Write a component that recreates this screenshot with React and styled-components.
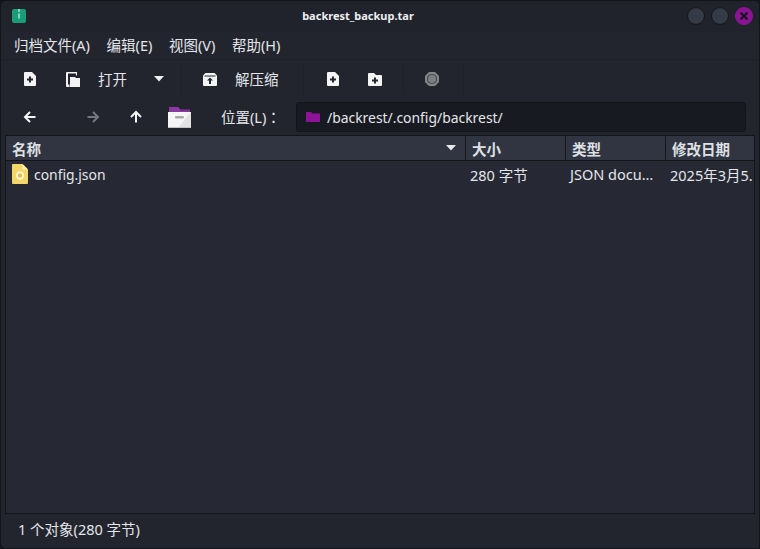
import React from "react"
import styled, { createGlobalStyle } from "styled-components"

const Global = createGlobalStyle`
  html, body {
    margin: 0;
    padding: 0;
    background: #14151b;
  }
  * {
    box-sizing: border-box;
  }
`

const FileAddIcon = () => (
  <svg width="12" height="14" viewBox="0 0 12 14">
    <path d="M1 0H8L12 4V13a1 1 0 0 1-1 1H1a1 1 0 0 1-1-1V1a1 1 0 0 1 1-1Z" fill="#f4f4f4" />
    <path d="M5 4.5H7V6.5H9V8.5H7V10.5H5V8.5H3V6.5H5Z" fill="#23252f" />
  </svg>
)

const OpenIcon = () => (
  <svg width="14" height="15" viewBox="0 0 14 15">
    <path d="M1 0H11V3.5H10V1.5H2V12.5H3.5V15H1a1 1 0 0 1-1-1V1a1 1 0 0 1 1-1Z" fill="#f4f4f4" />
    <path d="M4 5H9L10 6H14V15H4Z" fill="#f4f4f4" />
  </svg>
)

const ExtractIcon = () => (
  <svg width="14" height="13" viewBox="0 0 14 13">
    <path d="M2.5 0H11.5L14 2.5V12a1 1 0 0 1-1 1H1a1 1 0 0 1-1-1V2.5Z" fill="#f4f4f4" />
    <path d="M1.5 3H12.5" stroke="#23252f" strokeWidth="1" />
    <path d="M7 4.5L10 7.5H8V11H6V7.5H4Z" fill="#23252f" />
  </svg>
)

const FolderAddIcon = () => (
  <svg width="14" height="13" viewBox="0 0 14 13">
    <path d="M0 1a1 1 0 0 1 1-1H6L8 2H13a1 1 0 0 1 1 1V12a1 1 0 0 1-1 1H1a1 1 0 0 1-1-1Z" fill="#f4f4f4" />
    <path d="M6 4.5H8V6.5H10V8.5H8V10.5H6V8.5H4V6.5H6Z" fill="#23252f" />
  </svg>
)

const StopIcon = () => (
  <svg width="16" height="16" viewBox="0 0 16 16">
    <path d="M5 1H11L15 5V11L11 15H5L1 11V5Z" fill="#85868a" />
    <circle cx="8" cy="8" r="5" fill="#2a2c33" />
    <circle cx="8" cy="8" r="4.4" fill="#7c7d82" />
  </svg>
)

const Arrow = ({ dir, color }) => {
  const turn = { left: 0, right: 180, up: 90 }[dir]
  return (
    <svg width="14" height="14" viewBox="0 0 14 14">
      <path
        d="M12.5 7H2.5M7 2L2 7L7 12"
        fill="none"
        stroke={color}
        strokeWidth="2"
        transform={`rotate(${turn} 7 7)`}
      />
    </svg>
  )
}

const ArchiveFolderIcon = () => (
  <svg width="23" height="21" viewBox="0 0 23 21">
    <path d="M1 0H10L12 2H22V8H1Z" fill="#8a3aa0" />
    <path d="M12 2H22V3.5H12Z" fill="#5e2a70" />
    <path d="M0 5H23V20a1 1 0 0 1-1 1H1a1 1 0 0 1-1-1Z" fill="#f5f5f5" />
    <path d="M23 5V20a1 1 0 0 1-1 1H10Z" fill="#e2e2e2" />
    <rect x="7" y="9" width="9" height="2.4" rx="1" fill="#a8a8a8" />
    <rect x="0" y="20" width="23" height="1" fill="#c4c4c4" />
  </svg>
)

const SmallFolderIcon = () => (
  <svg width="14" height="10" viewBox="0 0 14 10">
    <path d="M0 0H5L6.5 1.5H14V10H0Z" fill="#8d1496" />
  </svg>
)

const JsonFileIcon = () => (
  <svg width="16" height="20" viewBox="0 0 16 20">
    <path d="M1 0H10.5L16 5.5V19a1 1 0 0 1-1 1H1a1 1 0 0 1-1-1V1a1 1 0 0 1 1-1Z" fill="#f3d668" />
    <path d="M10.5 0L16 5.5H10.5Z" fill="#fbeeb4" />
    <circle cx="8" cy="11.5" r="3.2" fill="#e3c04e" stroke="#fff6d0" strokeWidth="2" />
  </svg>
)

const AppIcon = () => (
  <svg width="14" height="14" viewBox="0 0 14 14">
    <rect width="14" height="14" rx="2" fill="#1a9c78" />
    <rect x="6" y="0" width="2" height="3" fill="#7fd8bd" />
    <rect x="6" y="4.5" width="2" height="5" fill="#7fd8bd" />
  </svg>
)

const App = () => (
  <Window>
    <Global />
    <TitleBar>
      <TitleIcon>
        <AppIcon />
      </TitleIcon>
      <Title>backrest_backup.tar</Title>
      <WindowControls>
        <WindowDot />
        <WindowDot />
        <CloseDot>
          <svg width="10" height="10" viewBox="0 0 10 10">
            <path d="M1.5 1.5L8.5 8.5M8.5 1.5L1.5 8.5" stroke="#14151b" strokeWidth="2.2" />
          </svg>
        </CloseDot>
      </WindowControls>
    </TitleBar>

    <MenuBar>
      <MenuItem>归档文件(A)</MenuItem>
      <MenuItem>编辑(E)</MenuItem>
      <MenuItem>视图(V)</MenuItem>
      <MenuItem>帮助(H)</MenuItem>
    </MenuBar>

    <Toolbar>
      <ToolGroup $width={181}>
        <ToolIcon $width={22} $left={18}>
          <FileAddIcon />
        </ToolIcon>
        <ToolIcon $width={22} $left={21}>
          <OpenIcon />
        </ToolIcon>
        <ToolLabel $left={14}>打开</ToolLabel>
        <ToolIcon $width={12} $left={26}>
          <svg width="10" height="6" viewBox="0 0 10 6">
            <path d="M0 0H10L5 5.5Z" fill="#f0f0f0" />
          </svg>
        </ToolIcon>
      </ToolGroup>
      <ToolGroup $width={122}>
        <ToolIcon $width={14} $left={21}>
          <ExtractIcon />
        </ToolIcon>
        <ToolLabel $left={18}>解压缩</ToolLabel>
      </ToolGroup>
      <ToolGroup $width={100}>
        <ToolIcon $width={12} $left={23}>
          <FileAddIcon />
        </ToolIcon>
        <ToolIcon $width={14} $left={29}>
          <FolderAddIcon />
        </ToolIcon>
      </ToolGroup>
      <ToolGroup $width={60}>
        <ToolIcon $width={16} $left={20}>
          <StopIcon />
        </ToolIcon>
      </ToolGroup>
    </Toolbar>

    <LocationBar>
      <NavButton $left={22}>
        <Arrow dir="left" color="#f4f4f4" />
      </NavButton>
      <NavButton $left={49}>
        <Arrow dir="right" color="#75767b" />
      </NavButton>
      <NavButton $left={29}>
        <Arrow dir="up" color="#f4f4f4" />
      </NavButton>
      <NavButton $left={25} $width={23}>
        <ArchiveFolderIcon />
      </NavButton>
      <LocationLabel>
        位置(L)<Colon>：</Colon>
      </LocationLabel>
      <PathEntry>
        <SmallFolderIcon />
        <PathText>/backrest/.config/backrest/</PathText>
      </PathEntry>
    </LocationBar>

    <ListFrame>
      <ListHeader>
        <NameHead>
          名称
          <svg width="10" height="6" viewBox="0 0 10 6">
            <path d="M0 0H10L5 5.5Z" fill="#e8e8e8" />
          </svg>
        </NameHead>
        <HeadCell $width={100}>大小</HeadCell>
        <HeadCell $width={100}>类型</HeadCell>
        <HeadCell $width={88}>修改日期</HeadCell>
      </ListHeader>
      <FileRow>
        <NameCell>
          <JsonFileIcon />
          <FileName>config.json</FileName>
        </NameCell>
        <DataCell $width={100}>280 字节</DataCell>
        <DataCell $width={100}>JSON docu…</DataCell>
        <DataCell $width={88}>2025年3月5.</DataCell>
      </FileRow>
    </ListFrame>

    <StatusBar>1 个对象(280 字节)</StatusBar>
  </Window>
)

export default App

const uiFont = `"Noto Sans", "Noto Sans CJK SC", sans-serif`

const Window = styled.div`
  width: 760px;
  height: 549px;
  display: flex;
  flex-direction: column;
  background: #22252e;
  border: 1px solid #14151b;
  border-radius: 6px 6px 0 6px;
  overflow: hidden;
  font-family: ${uiFont};
  font-size: 14.5px;
  color: #e4e6ea;
`

const TitleBar = styled.div`
  height: 31px;
  display: flex;
  align-items: center;
  position: relative;
  background: #21232c;
  padding: 0 6px 0 11px;
`

const TitleIcon = styled.div`
  display: flex;
  margin-top: -1px;
`

const Title = styled.div`
  position: absolute;
  left: 0;
  width: 714px;
  margin-top: -2px;
  text-align: center;
  font-size: 11px;
  font-weight: 700;
  color: #eceef0;
`

const WindowControls = styled.div`
  display: flex;
  gap: 6px;
  margin-left: auto;
  margin-top: -1px;
`

const WindowDot = styled.div`
  width: 18px;
  height: 18px;
  border-radius: 50%;
  background: #353a47;
  border: 1px solid #14151b;
`

const CloseDot = styled(WindowDot)`
  display: flex;
  align-items: center;
  justify-content: center;
  background: #8d1496;
  border-color: #8d1496;
`

const MenuBar = styled.div`
  height: 28px;
  display: flex;
  align-items: center;
  gap: 16.6px;
  padding: 0 0 2px 13px;
  border-bottom: 1px solid #1f212a;
`

const MenuItem = styled.div`
  font-size: 14.5px;
`

const Toolbar = styled.div`
  height: 38px;
  display: flex;
  align-items: center;
`

const ToolGroup = styled.div`
  width: ${(p) => p.$width}px;
  height: 32px;
  display: flex;
  align-items: center;
  border-right: 1px solid #1f212a;
`

const ToolIcon = styled.div`
  width: ${(p) => p.$width}px;
  margin-left: ${(p) => p.$left || 0}px;
  display: flex;
  justify-content: center;
`

const ToolLabel = styled.div`
  margin-left: ${(p) => p.$left}px;
  margin-top: -2px;
`

const LocationBar = styled.div`
  height: 36px;
  padding-top: 2px;
  display: flex;
  align-items: center;
`

const NavButton = styled.div`
  width: ${(p) => p.$width || 14}px;
  margin-left: ${(p) => p.$left}px;
  display: flex;
  justify-content: center;
`

const LocationLabel = styled.div`
  margin: -2px 0 0 30px;
  width: 75px;
`

const Colon = styled.span`
  font-family: "Noto Sans CJK TC", sans-serif;
`

const PathEntry = styled.div`
  width: 450px;
  height: 30px;
  display: flex;
  align-items: center;
  gap: 7px;
  padding-left: 9px;
  background: #181a22;
  border: 1px solid #14151b;
  border-radius: 3px;
`

const PathText = styled.span`
  font-size: 13.9px;
`

const ListFrame = styled.div`
  flex: 1;
  margin: 1px 4px 0 4px;
  background: #262934;
  border: 1px solid #14151b;
  min-height: 0;
`

const ListHeader = styled.div`
  height: 25px;
  display: flex;
  background: #313542;
  border-bottom: 1px solid #14151b;
`

const HeadCell = styled.div`
  width: ${(p) => p.$width}px;
  display: flex;
  align-items: center;
  padding-left: 6px;
  font-weight: 700;
  border-right: 1px solid #14151b;
  color: #dfe1e5;

  &:last-child {
    border-right: 0;
  }
`

const NameHead = styled(HeadCell)`
  flex: 1;
  justify-content: space-between;
  padding-right: 9px;
`

const FileRow = styled.div`
  height: 26px;
  display: flex;
  align-items: center;
`

const NameCell = styled.div`
  flex: 1;
  display: flex;
  align-items: center;
  gap: 6px;
  padding-left: 6px;
`

const FileName = styled.span`
  font-size: 13.9px;
`

const DataCell = styled.div`
  width: ${(p) => p.$width}px;
  padding-left: 4px;
  white-space: nowrap;
  overflow: hidden;
`

const StatusBar = styled.div`
  height: 34px;
  display: flex;
  align-items: center;
  padding: 0 0 5px 17px;
`
